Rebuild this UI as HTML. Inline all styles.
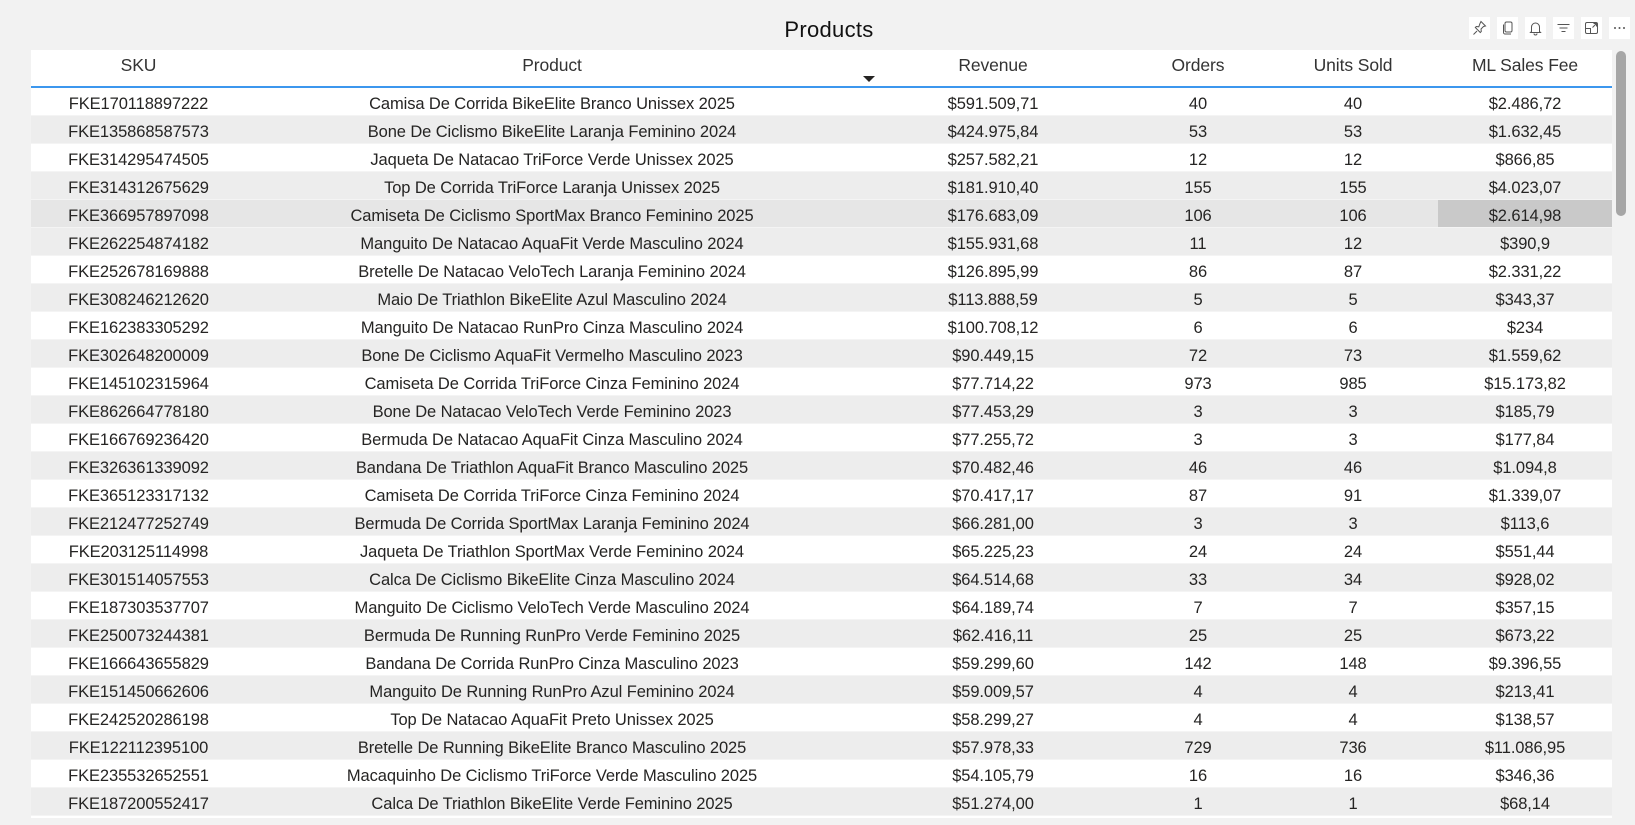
<!DOCTYPE html>
<html><head><meta charset="utf-8"><style>
body{margin:0;width:1635px;height:825px;background:#f2f2f2;font-family:"Liberation Sans",sans-serif;color:#252423;position:relative;overflow:hidden}
.title{position:absolute;left:0;width:1658px;top:17px;text-align:center;font-size:22px;color:#111;letter-spacing:.3px}
.ic{position:absolute;top:17px;width:21px;height:22px;background:#fff}
.ic svg{position:absolute;left:3px;top:3px}
.tbl{position:absolute;left:31px;top:50px;width:1581px;height:768px;background:#fff}
.hd{position:absolute;left:0;top:0;width:1581px;height:38px;border-bottom:2px solid #3c97ee;box-sizing:border-box}
.c{position:absolute;text-align:center;font-size:16.5px;white-space:nowrap;letter-spacing:-.1px}
.row{position:absolute;left:0;width:1581px;height:28px;border-bottom:1px solid #f4f4f4;box-sizing:border-box}
.row .c{top:7px}
.hd .c{top:5px;font-size:17.5px;color:#333}
.sb{position:absolute;left:1616px;top:51px;width:10px;height:165px;background:#a6a6a6;border-radius:5px}
</style></head><body>
<div class="title">Products</div>
<div class="ic" style="left:1469px"><svg width="15" height="16" viewBox="0 0 15 16" fill="none" stroke="#555" stroke-width="1"><path d="M9 1.5l4.5 4.5-2 .5-2.5 2.5.3 2.5-1 1-5-5 1-1 2.5.3L8 3.5zM5 11l-3.5 3.5"/></svg></div>
<div class="ic" style="left:1497px"><svg width="15" height="16" viewBox="0 0 15 16" fill="none" stroke="#555" stroke-width="1"><rect x="5" y="2" width="7" height="10" rx="1.5"/><path d="M3.5 4.5v8a1.5 1.5 0 0 0 1.5 1.5h6"/></svg></div>
<div class="ic" style="left:1525px"><svg width="15" height="16" viewBox="0 0 15 16" fill="none" stroke="#555" stroke-width="1"><path d="M3.5 11.5V7a4 4 0 0 1 8 0v4.5l1 1h-10zM6 13.5a1.5 1.5 0 0 0 3 0"/></svg></div>
<div class="ic" style="left:1553px"><svg width="15" height="16" viewBox="0 0 15 16" fill="none" stroke="#555" stroke-width="1"><path d="M1.5 4.5h12M3.5 8h8M5.5 11.5h4"/></svg></div>
<div class="ic" style="left:1581px"><svg width="15" height="16" viewBox="0 0 15 16" fill="none" stroke="#555" stroke-width="1"><rect x="1.5" y="2.5" width="12" height="11" rx="1.5"/><path d="M1.5 8.5h5v5M8.5 7.5l4-4M9.5 3.5h3v3"/></svg></div>
<div class="ic" style="left:1609px"><svg width="15" height="16" viewBox="0 0 15 16" fill="#555"><circle cx="3" cy="8" r="1"/><circle cx="7.5" cy="8" r="1"/><circle cx="12" cy="8" r="1"/></svg></div>
<div class="tbl">
<div class="hd">
<div class="c" style="left:0;width:215px">SKU</div>
<div class="c" style="left:215px;width:612px">Product</div>
<div class="c" style="left:827px;width:270px">Revenue</div>
<div class="c" style="left:1097px;width:140px">Orders</div>
<div class="c" style="left:1237px;width:170px">Units Sold</div>
<div class="c" style="left:1407px;width:174px">ML Sales Fee</div>
<svg style="position:absolute;left:832px;top:26px" width="12" height="6"><path d="M0 0h12L6 6z" fill="#252423"/></svg>
</div>
<div id="rows"></div>
</div>
<div class="sb"></div>
<script>
var d=[
["FKE170118897222","Camisa De Corrida BikeElite Branco Unissex 2025","$591.509,71","40","40","$2.486,72"],
["FKE135868587573","Bone De Ciclismo BikeElite Laranja Feminino 2024","$424.975,84","53","53","$1.632,45"],
["FKE314295474505","Jaqueta De Natacao TriForce Verde Unissex 2025","$257.582,21","12","12","$866,85"],
["FKE314312675629","Top De Corrida TriForce Laranja Unissex 2025","$181.910,40","155","155","$4.023,07"],
["FKE366957897098","Camiseta De Ciclismo SportMax Branco Feminino 2025","$176.683,09","106","106","$2.614,98"],
["FKE262254874182","Manguito De Natacao AquaFit Verde Masculino 2024","$155.931,68","11","12","$390,9"],
["FKE252678169888","Bretelle De Natacao VeloTech Laranja Feminino 2024","$126.895,99","86","87","$2.331,22"],
["FKE308246212620","Maio De Triathlon BikeElite Azul Masculino 2024","$113.888,59","5","5","$343,37"],
["FKE162383305292","Manguito De Natacao RunPro Cinza Masculino 2024","$100.708,12","6","6","$234"],
["FKE302648200009","Bone De Ciclismo AquaFit Vermelho Masculino 2023","$90.449,15","72","73","$1.559,62"],
["FKE145102315964","Camiseta De Corrida TriForce Cinza Feminino 2024","$77.714,22","973","985","$15.173,82"],
["FKE862664778180","Bone De Natacao VeloTech Verde Feminino 2023","$77.453,29","3","3","$185,79"],
["FKE166769236420","Bermuda De Natacao AquaFit Cinza Masculino 2024","$77.255,72","3","3","$177,84"],
["FKE326361339092","Bandana De Triathlon AquaFit Branco Masculino 2025","$70.482,46","46","46","$1.094,8"],
["FKE365123317132","Camiseta De Corrida TriForce Cinza Feminino 2024","$70.417,17","87","91","$1.339,07"],
["FKE212477252749","Bermuda De Corrida SportMax Laranja Feminino 2024","$66.281,00","3","3","$113,6"],
["FKE203125114998","Jaqueta De Triathlon SportMax Verde Feminino 2024","$65.225,23","24","24","$551,44"],
["FKE301514057553","Calca De Ciclismo BikeElite Cinza Masculino 2024","$64.514,68","33","34","$928,02"],
["FKE187303537707","Manguito De Ciclismo VeloTech Verde Masculino 2024","$64.189,74","7","7","$357,15"],
["FKE250073244381","Bermuda De Running RunPro Verde Feminino 2025","$62.416,11","25","25","$673,22"],
["FKE166643655829","Bandana De Corrida RunPro Cinza Masculino 2023","$59.299,60","142","148","$9.396,55"],
["FKE151450662606","Manguito De Running RunPro Azul Feminino 2024","$59.009,57","4","4","$213,41"],
["FKE242520286198","Top De Natacao AquaFit Preto Unissex 2025","$58.299,27","4","4","$138,57"],
["FKE122112395100","Bretelle De Running BikeElite Branco Masculino 2025","$57.978,33","729","736","$11.086,95"],
["FKE235532652551","Macaquinho De Ciclismo TriForce Verde Masculino 2025","$54.105,79","16","16","$346,36"],
["FKE187200552417","Calca De Triathlon BikeElite Verde Feminino 2025","$51.274,00","1","1","$68,14"]];
var L=[[0,215],[215,612],[827,270],[1097,140],[1237,170],[1407,174]],h="";
d.forEach(function(r,i){var bg=i==4?"#e6e6e6":(i%2?"#ededed":"#fff");
h+='<div class="row" style="top:'+(38+i*28)+'px;background:'+bg+'">';
if(i==4)h+='<div style="position:absolute;left:1407px;top:0;width:174px;height:27px;background:#c9c9c9"></div>';
r.forEach(function(t,j){h+='<div class="c" style="left:'+L[j][0]+'px;width:'+L[j][1]+'px">'+t+'</div>'});h+='</div>'});
document.getElementById("rows").innerHTML=h;
</script>
</body></html>
